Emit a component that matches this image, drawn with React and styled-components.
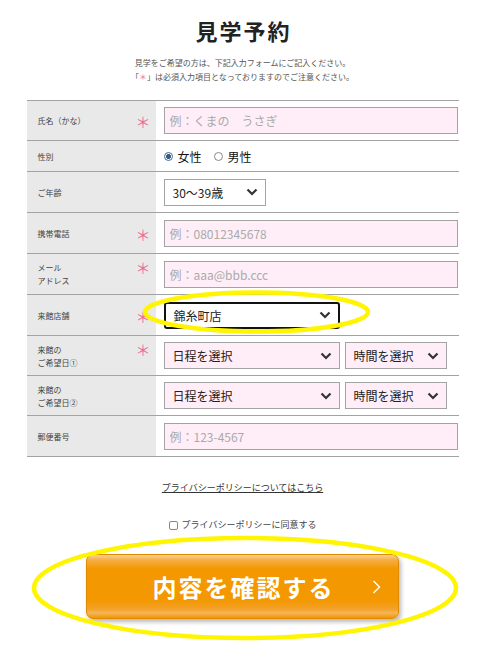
import React from 'react';
import styled, { createGlobalStyle } from 'styled-components';

const GlobalStyle = createGlobalStyle`
  html, body {
    margin: 0;
    padding: 0;
    background: #fff;
  }
  body {
    font-family: "Noto Sans CJK JP", "Noto Sans", sans-serif;
    color: #333;
  }
`;

const Page = styled.div`
  position: relative;
  width: 485px;
  height: 648px;
  overflow: hidden;
  padding-top: 18px;
  box-sizing: border-box;
`;

const Title = styled.h1`
  margin: 0;
  padding-left: 2px;
  text-align: center;
  font-size: 22px;
  line-height: 24px;
  font-weight: 700;
  letter-spacing: 2px;
  color: #222;
`;

const Notice = styled.p`
  margin: 14px 0 0;
  text-align: center;
  font-size: 8px;
  line-height: 14px;
  color: #555;
`;

const Pink = styled.span`
  color: #f06d9c;
`;

const Table = styled.div`
  width: 432px;
  margin: 16px auto 0;
  border-top: 1px solid #a3a3a3;
`;

const Row = styled.div`
  display: grid;
  grid-template-columns: 129px 1fr;
  height: ${(p) => p.$h || 40}px;
  border-bottom: 1px solid #a3a3a3;
`;

const LabelCell = styled.div`
  display: flex;
  align-items: center;
  justify-content: space-between;
  padding: 0 5px 0 11px;
  background: #e9e9e9;
`;

const LabelText = styled.span`
  font-size: 8px;
  line-height: 13px;
  color: #444;
`;

const Req = styled.span`
  align-self: ${(p) => (p.$top ? 'flex-start' : 'center')};
  margin-top: ${(p) => (p.$top ? '6px' : '2px')};
  font-size: 15px;
  line-height: 1;
  color: #f06d9c;
`;

const ValueCell = styled.div`
  display: flex;
  align-items: center;
  gap: 5px;
  padding: 0 1px 0 8px;
`;

const TextInput = styled.input`
  width: 100%;
  height: 27px;
  box-sizing: border-box;
  margin: 0;
  padding: 0 5px;
  border: 1px solid #a3a3a3;
  background: #ffeef7;
  font-family: inherit;
  font-size: 12px;
  color: #333;
  outline: none;

  &::placeholder {
    color: #aaa;
  }
`;

const SelectBox = styled.div`
  display: flex;
  align-items: center;
  justify-content: space-between;
  width: ${(p) => p.$w}px;
  height: 27px;
  box-sizing: border-box;
  padding: 0 7px 0 8px;
  border: ${(p) => (p.$focus ? '2px solid #111' : '1px solid #a3a3a3')};
  border-radius: ${(p) => (p.$focus ? '3px' : '0')};
  background: ${(p) => (p.$pink ? '#ffeef7' : '#fff')};
  font-size: 12px;
  color: #222;
`;

const RadioGroup = styled.div`
  display: flex;
  align-items: center;
  gap: 12px;
`;

const RadioLabel = styled.label`
  display: flex;
  align-items: center;
  gap: 5px;
  font-size: 12px;
  color: #111;
`;

const RadioDot = styled.span`
  width: 9px;
  height: 9px;
  box-sizing: border-box;
  border-radius: 50%;
  border: 1px solid ${(p) => (p.$on ? '#4a6a8c' : '#888')};
  background: ${(p) =>
    p.$on ? 'radial-gradient(circle, #2f5d8f 0 2.2px, #fff 2.6px)' : '#fff'};
`;

const PolicyLink = styled.a`
  display: block;
  width: max-content;
  margin: 24px auto 0;
  font-size: 9px;
  line-height: 14px;
  color: #333;
  text-decoration: underline;
`;

const Agree = styled.label`
  display: flex;
  align-items: center;
  justify-content: center;
  gap: 4px;
  margin-top: 23px;
  font-size: 9px;
  line-height: 14px;
  color: #444;
`;

const CheckBox = styled.span`
  width: 9px;
  height: 9px;
  box-sizing: border-box;
  border: 1px solid #888;
  border-radius: 2px;
  background: #fff;
`;

const ConfirmButton = styled.button`
  display: grid;
  grid-template-columns: 1fr auto 1fr;
  align-items: center;
  width: 313px;
  height: 65px;
  margin: 22px auto 0;
  padding: 0 17px;
  border: 1px solid #e08a00;
  border-radius: 7px;
  background: linear-gradient(
    to bottom,
    #f9cf92 0%,
    #f5ae45 8%,
    #f39800 22%,
    #f39800 72%,
    #f3a12a 86%,
    #f6b55a 92%,
    #f29600 100%
  );
  box-shadow: 2px 3px 4px rgba(0, 0, 0, 0.28);
  font-family: inherit;
  cursor: pointer;
`;

const ButtonText = styled.span`
  grid-column: 2;
  padding-left: 2px;
  font-size: 24px;
  font-weight: 700;
  letter-spacing: 2px;
  color: #fff;
`;

const ButtonArrow = styled.span`
  grid-column: 3;
  justify-self: end;
  display: flex;
`;

const Marks = styled.svg`
  position: absolute;
  inset: 0;
  pointer-events: none;
`;

const Chevron = () => (
  <svg width="12" height="8" viewBox="0 0 12 8">
    <path d="M1.5 1.5 L6 6 L10.5 1.5" fill="none" stroke="#333" strokeWidth="2.2" />
  </svg>
);

const Select = ({ w, pink, focus, children }) => (
  <SelectBox $w={w} $pink={pink} $focus={focus}>
    <span>{children}</span>
    <Chevron />
  </SelectBox>
);

const Label = ({ children, req, top }) => (
  <LabelCell>
    <LabelText>{children}</LabelText>
    {req && <Req $top={top}>＊</Req>}
  </LabelCell>
);

export default function App() {
  return (
    <Page>
      <GlobalStyle />
      <Title>見学予約</Title>
      <Notice>
        見学をご希望の方は、下記入力フォームにご記入ください。
        <br />
        「<Pink>＊</Pink>」は必須入力項目となっておりますのでご注意ください。
      </Notice>

      <Table>
        <Row $h={39}>
          <Label req>氏名（かな）</Label>
          <ValueCell>
            <TextInput placeholder="例：くまの　うさぎ" />
          </ValueCell>
        </Row>
        <Row $h={30}>
          <Label>性別</Label>
          <ValueCell>
            <RadioGroup>
              <RadioLabel>
                <RadioDot $on />
                女性
              </RadioLabel>
              <RadioLabel>
                <RadioDot />
                男性
              </RadioLabel>
            </RadioGroup>
          </ValueCell>
        </Row>
        <Row>
          <Label>ご年齢</Label>
          <ValueCell>
            <Select w={102}>30〜39歳</Select>
          </ValueCell>
        </Row>
        <Row>
          <Label req>携帯電話</Label>
          <ValueCell>
            <TextInput placeholder="例：08012345678" />
          </ValueCell>
        </Row>
        <Row>
          <Label req top>
            メール
            <br />
            アドレス
          </Label>
          <ValueCell>
            <TextInput placeholder="例：aaa@bbb.ccc" />
          </ValueCell>
        </Row>
        <Row>
          <Label req>来館店舗</Label>
          <ValueCell>
            <Select w={176} focus>錦糸町店</Select>
          </ValueCell>
        </Row>
        <Row $h={39}>
          <Label req top>
            来館の
            <br />
            ご希望日①
          </Label>
          <ValueCell>
            <Select w={176} pink>日程を選択</Select>
            <Select w={102} pink>時間を選択</Select>
          </ValueCell>
        </Row>
        <Row $h={39}>
          <Label>
            来館の
            <br />
            ご希望日②
          </Label>
          <ValueCell>
            <Select w={176} pink>日程を選択</Select>
            <Select w={102} pink>時間を選択</Select>
          </ValueCell>
        </Row>
        <Row>
          <Label>郵便番号</Label>
          <ValueCell>
            <TextInput placeholder="例：123-4567" />
          </ValueCell>
        </Row>
      </Table>

      <PolicyLink href="#">プライバシーポリシーについてはこちら</PolicyLink>
      <Agree>
        <CheckBox />
        プライバシーポリシーに同意する
      </Agree>

      <ConfirmButton type="button">
        <ButtonText>内容を確認する</ButtonText>
        <ButtonArrow>
          <svg width="9" height="14" viewBox="0 0 9 14">
            <path d="M1.5 1 L7.5 7 L1.5 13" fill="none" stroke="#fff" strokeWidth="1.4" />
          </svg>
        </ButtonArrow>
      </ConfirmButton>

      <Marks width="485" height="648" viewBox="0 0 485 648">
        <ellipse cx="256.5" cy="312" rx="111.5" ry="19.5" fill="none" stroke="#fff500" strokeWidth="4.5" />
        <ellipse cx="245" cy="588" rx="211" ry="50" fill="none" stroke="#fff500" strokeWidth="4.5" />
      </Marks>
    </Page>
  );
}
